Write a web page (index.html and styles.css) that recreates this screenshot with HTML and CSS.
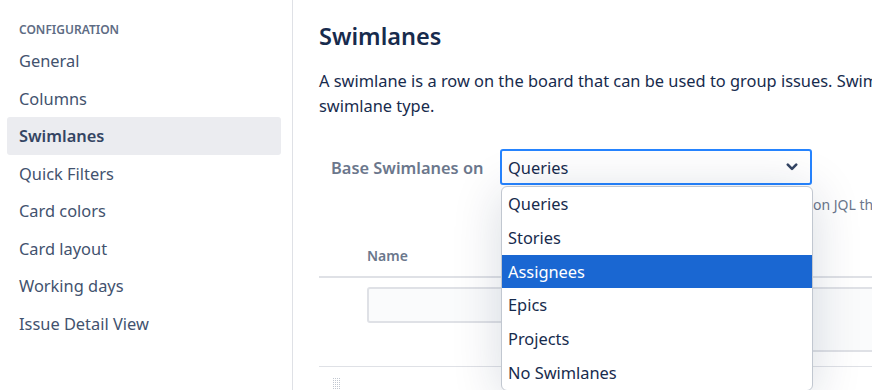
FILE: index.html
```html
<!DOCTYPE html>
<html lang="en">
    <head>
        <meta charset="UTF-8" />
        <meta name="viewport" content="width=device-width, initial-scale=1.0" />
        <title>Board configuration - Swimlanes</title>
        <link rel="stylesheet" href="styles.css">
    </head>
    <body>
        <div class="page">
            <nav class="sidebar">
                <div class="sidebar-title">Configuration</div>
                <a class="nav-item">General</a>
                <a class="nav-item">Columns</a>
                <a class="nav-item active">Swimlanes</a>
                <a class="nav-item">Quick Filters</a>
                <a class="nav-item">Card colors</a>
                <a class="nav-item">Card layout</a>
                <a class="nav-item">Working days</a>
                <a class="nav-item">Issue Detail View</a>
            </nav>

            <main class="content">
                <h1>Swimlanes</h1>
                <p class="intro">
                    A swimlane is a row on the board that can be used to group issues. Swimlanes can be based on queries, stories, assignees, epics or projects. Choose your<br>
                    swimlane type.
                </p>

                <div class="field-row">
                    <label class="field-label">Base Swimlanes on</label>
                    <div class="select-wrap">
                        <div class="select">
                            <span>Queries</span>
                            <svg class="chevron" width="12" height="8" viewBox="0 0 12 8">
                                <path d="M1.8 1.6 L6 5.8 L10.2 1.6" fill="none" stroke="#344563" stroke-width="2.6" stroke-linecap="round" stroke-linejoin="round"/>
                            </svg>
                        </div>
                        <ul class="dropdown">
                            <li>Queries</li>
                            <li>Stories</li>
                            <li class="selected">Assignees</li>
                            <li>Epics</li>
                            <li>Projects</li>
                            <li>No Swimlanes</li>
                        </ul>
                    </div>
                </div>

                <div class="hint-row">
                    <span class="hint">Swimlanes are based on JQL that you define below.</span>
                </div>

                <div class="table">
                    <div class="table-head">
                        <span class="col-name">Name</span>
                    </div>
                    <div class="table-new">
                        <div class="input name-input"></div>
                        <div class="input jql-input"></div>
                    </div>
                    <div class="table-row">
                        <svg class="grip" width="8" height="12" viewBox="0 0 8 12">
                            <g fill="#c1c7d0">
                                <rect x="0" y="0" width="1" height="1"/><rect x="2" y="0" width="1" height="1"/><rect x="4" y="0" width="1" height="1"/><rect x="6" y="0" width="1" height="1"/>
                                <rect x="0" y="2" width="1" height="1"/><rect x="2" y="2" width="1" height="1"/><rect x="4" y="2" width="1" height="1"/><rect x="6" y="2" width="1" height="1"/>
                                <rect x="0" y="4" width="1" height="1"/><rect x="2" y="4" width="1" height="1"/><rect x="4" y="4" width="1" height="1"/><rect x="6" y="4" width="1" height="1"/>
                                <rect x="0" y="6" width="1" height="1"/><rect x="2" y="6" width="1" height="1"/><rect x="4" y="6" width="1" height="1"/><rect x="6" y="6" width="1" height="1"/>
                                <rect x="0" y="8" width="1" height="1"/><rect x="2" y="8" width="1" height="1"/><rect x="4" y="8" width="1" height="1"/><rect x="6" y="8" width="1" height="1"/>
                                <rect x="0" y="10" width="1" height="1"/><rect x="2" y="10" width="1" height="1"/><rect x="4" y="10" width="1" height="1"/><rect x="6" y="10" width="1" height="1"/>
                            </g>
                        </svg>
                        <span class="row-name">Expedite</span>
                        <span class="row-jql">Blocker</span>
                    </div>
                </div>
            </main>
        </div>
    </body>
</html>
```

FILE: styles.css
```css
body {
    margin: 0;
    font-family: "Noto Sans", "Open Sans", sans-serif;
    color: #172b4d;
    background: #fff;
    overflow: hidden;
}
.page {
    display: flex;
    height: 390px;
}
.sidebar {
    width: 292px;
    flex-shrink: 0;
    border-right: 1px solid #dfe1e6;
    padding-top: 21px;
}
.sidebar-title {
    font-size: 12px;
    font-weight: 600;
    text-transform: uppercase;
    color: #5e6c84;
    padding-left: 19px;
    line-height: 18px;
    margin-bottom: 3px;
}
.nav-item {
    display: block;
    margin: 0 11px 0 7px;
    padding: 8px 12px;
    line-height: 21.5px;
    font-size: 16.4px;
    color: #42526e;
    border-radius: 3px;
}
.nav-item.active {
    background: #ebecf0;
    font-weight: 600;
    color: #344563;
}
.content {
    flex: 1;
    padding-left: 26px;
    min-width: 0;
    white-space: nowrap;
    overflow: hidden;
}
h1 {
    font-size: 23.5px;
    font-weight: 600;
    margin: 22px 0 0;
    line-height: 28px;
}
.intro {
    font-size: 16.4px;
    line-height: 25px;
    margin: 18px 0 0;
}
.field-row {
    display: flex;
    align-items: center;
    margin-top: 31px;
}
.field-label {
    width: 181px;
    box-sizing: border-box;
    padding-left: 12px;
    font-size: 16.4px;
    font-weight: 600;
    color: #6b778c;
}
.select-wrap {
    position: relative;
}
.select {
    width: 290px;
    height: 32px;
    border: 2px solid #2684ff;
    border-radius: 3px;
    display: flex;
    align-items: center;
    justify-content: space-between;
    padding: 0 12px 0 6px;
    font-size: 16.4px;
}
.chevron {
    display: block;
}
.dropdown {
    position: absolute;
    top: 37px;
    left: 1px;
    width: 310px;
    margin: 0;
    padding: 0;
    list-style: none;
    background: #fff;
    border: 1px solid #c1c7d0;
    border-radius: 6px;
    box-shadow: 0 6px 50px rgba(9, 30, 66, 0.16);
    overflow: hidden;
    z-index: 2;
}
.dropdown li {
    height: 33.8px;
    line-height: 33.8px;
    padding-left: 6px;
    font-size: 16.4px;
}
.dropdown li.selected {
    background: #1a67d2;
    color: #fff;
}
.hint-row {
    margin-top: 9px;
    line-height: 20px;
}
.hint {
    display: inline-block;
    font-size: 14px;
    color: #6b778c;
    margin-left: 352px;
}
.table {
    margin-top: 30px;
}
.table-head {
    border-bottom: 2px solid #dfe1e6;
    padding: 0 0 10px 48px;
    line-height: 20px;
}
.col-name {
    font-size: 14px;
    font-weight: 600;
    color: #6b778c;
}
.table-new {
    display: flex;
    gap: 14px;
    padding: 9px 0 14px 48px;
    border-bottom: 1px solid #dfe1e6;
    align-items: flex-start;
}
.input {
    background: #fafbfc;
    border: 2px solid #dfe1e6;
    border-radius: 3px;
    box-sizing: border-box;
}
.name-input {
    width: 180px;
    height: 36px;
}
.jql-input {
    flex: 1;
    height: 65px;
    border-right: none;
    border-radius: 3px 0 0 3px;
}
.table-row {
    display: flex;
    align-items: flex-start;
    padding-top: 11px;
    font-size: 16.4px;
    line-height: 22px;
}
.grip {
    display: block;
    flex-shrink: 0;
    margin-left: 14px;
}
.row-name {
    margin-left: 31px;
    margin-top: 8px;
    width: 449px;
}
.row-jql {
    margin-top: 8px;
}
```
